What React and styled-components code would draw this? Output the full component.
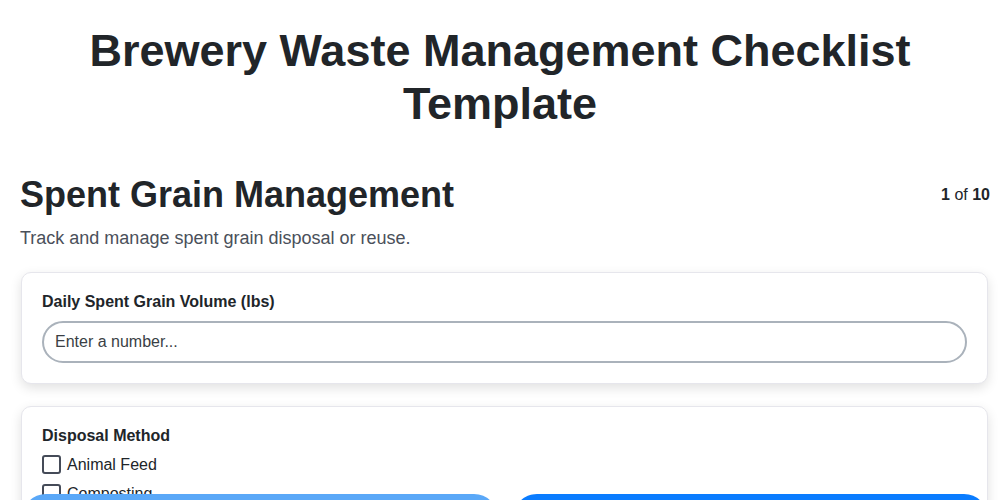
import React, { useState } from 'react'
import styled, { createGlobalStyle } from 'styled-components'

const GlobalStyle = createGlobalStyle`
  * { box-sizing: border-box; }
  html { scrollbar-width: none; }
  body {
    margin: 0;
    background: #fff;
    font-family: "Liberation Sans", Arial, Helvetica, sans-serif;
    color: #212529;
  }
`

const Title = styled.h1`
  font-size: 45px;
  line-height: 53px;
  font-weight: 700;
  text-align: center;
  margin: 24px 0 0;
  padding: 0 70px;
`

const Page = styled.div`
  padding: 43px 10px 120px 20px;
`

const StepHeader = styled.div`
  display: flex;
  justify-content: space-between;
  align-items: center;
`

const StepTitle = styled.h2`
  font-size: 36px;
  font-weight: 700;
  margin: 0;
  line-height: 1.2;
`

const Counter = styled.span`
  font-size: 16px;
  color: #212529;
  b { font-weight: 700; }
`

const Description = styled.p`
  font-size: 18px;
  color: #4a505a;
  margin: 12px 0 23px;
`

const Card = styled.div`
  background: #fff;
  border: 1px solid #e6e6ec;
  border-radius: 10px;
  box-shadow: 0 4px 12px rgba(0, 0, 0, 0.12);
  padding: 19px 20px 20px;
  margin: 0 2px 22px 1px;
`

const Label = styled.div`
  font-size: 16px;
  line-height: 19px;
  font-weight: 700;
  margin-bottom: 10px;
`

const Input = styled.input`
  width: 100%;
  height: 42px;
  border: 2px solid #aab2bb;
  border-radius: 21px;
  padding: 0 11px;
  font-size: 16px;
  font-family: inherit;
  outline: none;
  &::placeholder { color: #3a3f45; }
`

const Option = styled.label`
  display: flex;
  align-items: center;
  gap: 6px;
  font-size: 16px;
  margin: 0 0 10px;
  line-height: 19px;
`

const Box = styled.span`
  width: 19px;
  height: 19px;
  border: 2px solid #454b58;
  border-radius: 3px;
  background: ${p => (p.checked ? '#007bff' : '#fff')};
`

const Footer = styled.div`
  position: fixed;
  left: 22px;
  right: 12px;
  top: 494px;
  display: flex;
  gap: 15px;
`

const NavButton = styled.button`
  flex: 1;
  height: 48px;
  border: none;
  border-radius: 24px;
  background: ${p => (p.primary ? '#0a7cff' : '#5aa8f8')};
  color: #fff;
  font-size: 16px;
  font-family: inherit;
`

const options = ['Animal Feed', 'Composting', 'Landfill', 'Other']

export default function App() {
  const [checked, setChecked] = useState({})
  return (
    <>
      <GlobalStyle />
      <Title>Brewery Waste Management Checklist Template</Title>
      <Page>
        <StepHeader>
          <StepTitle>Spent Grain Management</StepTitle>
          <Counter><b>1</b> of <b>10</b></Counter>
        </StepHeader>
        <Description>Track and manage spent grain disposal or reuse.</Description>
        <Card>
          <Label>Daily Spent Grain Volume (lbs)</Label>
          <Input type="number" placeholder="Enter a number..." />
        </Card>
        <Card>
          <Label>Disposal Method</Label>
          {options.map(o => (
            <Option key={o} onClick={() => setChecked({ ...checked, [o]: !checked[o] })}>
              <Box checked={checked[o]} />
              {o}
            </Option>
          ))}
        </Card>
      </Page>
      <Footer>
        <NavButton>Previous</NavButton>
        <NavButton primary>Next</NavButton>
      </Footer>
    </>
  )
}
